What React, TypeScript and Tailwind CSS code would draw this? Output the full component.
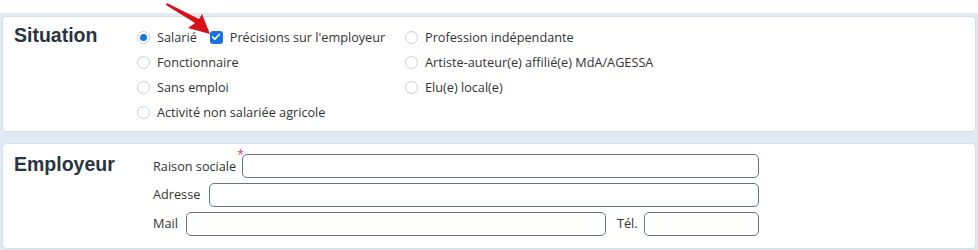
import { Check } from 'lucide-react';

function Radio({ label, checked }: { label: string; checked?: boolean }) {
    return (
        <label className="flex items-center gap-[7px] whitespace-nowrap">
            <span className="flex h-[13px] w-[13px] items-center justify-center rounded-full border border-[#c8cfd9] bg-white">
                {checked && <span className="h-[7px] w-[7px] rounded-full bg-[#1679e3]" />}
            </span>
            <span>{label}</span>
        </label>
    );
}

function Field({ className }: { className?: string }) {
    return <input type="text" className={`h-[24px] min-w-0 rounded-[5px] border border-[#66708a] bg-white px-2 outline-none ${className ?? ''}`} />;
}

export default function App() {
    return (
        <div className="relative h-[250px] w-[978px] overflow-hidden bg-white font-['Open_Sans',sans-serif] text-[12.7px] text-[#333]">
            {/* arrow pointing at the checkbox */}
            <svg className="absolute left-[160px] top-0" width="60" height="40" viewBox="0 0 60 40">
                <path d="M7 3 L39 19 L42 14 L50 34 L28 28 L35 23 L6 5 Z" fill="#d8121b" />
            </svg>

            <div className="mt-[13px] flex flex-col gap-[11px] bg-[#e1e9f2] px-[2px] pb-[1px] pt-[3px]">
                {/* Situation */}
                <div className="flex h-[116px] rounded-[4px] border border-[#d7dde5] bg-white pt-[6px]">
                    <div className="w-[134px] pl-[11px] font-['Liberation_Sans',sans-serif] text-[19.5px] font-bold leading-[24px] text-[#2a3440]">
                        Situation
                    </div>
                    <div className="grid auto-rows-[25px] grid-cols-[268px_1fr] items-center pt-[2px]">
                        <div className="flex items-center">
                            <Radio label="Salarié" checked />
                            <label className="ml-[13px] flex items-center gap-[7px] whitespace-nowrap">
                                <span className="flex h-[13px] w-[13px] items-center justify-center rounded-[3px] bg-[#1872e2]">
                                    <Check className="h-[10px] w-[10px] text-white" strokeWidth={4} />
                                </span>
                                <span>Précisions sur l'employeur</span>
                            </label>
                        </div>
                        <Radio label="Profession indépendante" />
                        <Radio label="Fonctionnaire" />
                        <Radio label="Artiste-auteur(e) affilié(e) MdA/AGESSA" />
                        <Radio label="Sans emploi" />
                        <Radio label="Elu(e) local(e)" />
                        <Radio label="Activité non salariée agricole" />
                    </div>
                </div>

                {/* Employeur */}
                <div className="flex h-[106px] rounded-[4px] border border-[#d7dde5] bg-white pt-[8px]">
                    <div className="w-[150px] pl-[11px] font-['Liberation_Sans',sans-serif] text-[19.5px] font-bold leading-[24px] text-[#2a3440]">
                        Employeur
                    </div>
                    <div className="flex w-[606px] flex-col gap-[5px] pt-[2px]">
                        <div className="flex items-center">
                            <span className="flex w-[89px] shrink-0 items-start whitespace-nowrap">
                                <span className="pt-[2px]">Raison sociale</span>
                                <span className="ml-[1px] mt-[-6px] text-[12px] leading-none text-[#e5356a]">*</span>
                            </span>
                            <Field className="flex-1" />
                        </div>
                        <div className="flex items-center">
                            <span className="w-[56px] shrink-0">Adresse</span>
                            <Field className="flex-1" />
                        </div>
                        <div className="flex items-center">
                            <span className="w-[33px] shrink-0">Mail</span>
                            <Field className="w-[420px] shrink-0" />
                            <span className="ml-[11px] w-[27px] shrink-0">Tél.</span>
                            <Field className="flex-1" />
                        </div>
                    </div>
                </div>
            </div>
        </div>
    );
}
